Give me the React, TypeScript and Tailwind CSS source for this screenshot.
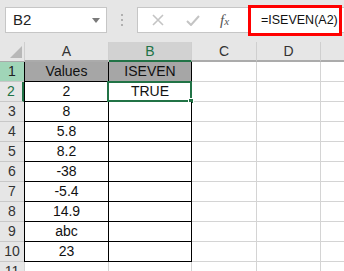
import React from 'react'

const font = { fontFamily: '"Liberation Sans", Arial, sans-serif' }

const rows: [string, string][] = [
    ['Values', 'ISEVEN'],
    ['2', 'TRUE'],
    ['8', ''],
    ['5.8', ''],
    ['8.2', ''],
    ['-38', ''],
    ['-5.4', ''],
    ['14.9', ''],
    ['abc', ''],
    ['23', ''],
    ['', ''],
]

function FormulaBar() {
    return (
        <div className="flex h-[42px] items-start bg-[#e6e6e6]">
            {/* Name box */}
            <div className="ml-[5px] mt-[7px] flex h-[26px] w-[102px] shrink-0 items-center justify-between border border-[#c6c6c6] bg-white pl-[7px] pr-[6px]">
                <span className="text-[15px] text-[#222]">B2</span>
                <svg width="8" height="5" viewBox="0 0 8 5">
                    <path d="M0 0h8L4 5z" fill="#7a7a7a" />
                </svg>
            </div>

            {/* Dots */}
            <div className="ml-[14px] mt-[14px] flex shrink-0 flex-col gap-[3px]">
                <span className="h-[2px] w-[2px] bg-[#b0b0b0]" />
                <span className="h-[2px] w-[2px] bg-[#b0b0b0]" />
                <span className="h-[2px] w-[2px] bg-[#b0b0b0]" />
            </div>

            {/* Formula box */}
            <div className="ml-[14px] mt-[7px] flex h-[26px] min-w-0 flex-1 items-center border border-r-0 border-[#c6c6c6] bg-white">
                <div className="flex w-[110px] shrink-0 items-center">
                    <svg className="ml-[14px]" width="12" height="12" viewBox="0 0 12 12">
                        <path d="M1 1l10 10M11 1L1 11" stroke="#c4c4c4" strokeWidth="1.6" />
                    </svg>
                    <svg className="ml-[22px]" width="14" height="11" viewBox="0 0 14 11">
                        <path d="M1 6l4 4 8-9" stroke="#c4c4c4" strokeWidth="2" fill="none" />
                    </svg>
                    <span
                        className="ml-[20px] text-[15px] italic text-[#555]"
                        style={{ fontFamily: '"Liberation Serif", serif' }}
                    >
                        f<span className="text-[11px]">x</span>
                    </span>
                </div>
                <div className="-my-[3px] mr-[2px] flex h-[31px] min-w-0 flex-1 items-center border-[3px] border-[#ff0000] bg-white pl-[10px]">
                    <span className="whitespace-nowrap text-[12.5px] text-[#111]">=ISEVEN(A2)</span>
                </div>
            </div>
        </div>
    )
}

function ColumnHeaders() {
    return (
        <div className="flex h-[20px] bg-[#e6e6e6] text-[14px] text-[#333]">
            <div className="relative w-[24px] border-b border-[#ababab]">
                <svg className="absolute bottom-[3px] right-[2px]" width="12" height="12" viewBox="0 0 12 12">
                    <path d="M12 0v12H0z" fill="#b8b8b8" />
                </svg>
            </div>
            <div className="flex w-[85px] items-center justify-center border-b-2 border-l border-r border-b-[#ababab] border-l-[#cfcfcf] border-r-[#cfcfcf]">
                A
            </div>
            <div className="flex w-[83px] items-center justify-center border-b-2 border-r border-b-[#217346] border-r-[#cfcfcf] bg-[#d2d2d2] text-[#217346]">
                B
            </div>
            <div className="flex w-[65px] items-center justify-center border-b-2 border-r border-b-[#ababab] border-r-[#cfcfcf]">
                C
            </div>
            <div className="flex w-[64px] items-center justify-center border-b-2 border-r border-b-[#ababab] border-r-[#cfcfcf]">
                D
            </div>
            <div className="flex-1 border-b-2 border-[#ababab]" />
        </div>
    )
}

export default function App() {
    return (
        <div className="h-[271px] w-[344px] overflow-hidden bg-white" style={font}>
            <FormulaBar />
            <ColumnHeaders />
            {rows.map(([a, b], i) => {
                const n = i + 1
                const inTable = n <= 10
                const lineA = inTable ? 'border-black' : 'border-[#d4d4d4]'
                const fill = n === 1 ? 'bg-[#a6a6a6]' : 'bg-white'
                return (
                    <div key={n} className="flex h-[20px] text-[14px] text-[#111]">
                        <div
                            className={`flex w-[24px] items-center justify-center border-b border-[#c8c8c8] ${
                                n === 1 ? 'bg-[#a0d5b8] text-[#222]' : 'bg-[#e6e6e6] text-[#333]'
                            } ${n === 2 ? 'border-r-2 border-r-[#217346] text-[#217346]' : ''}`}
                        >
                            {n}
                        </div>
                        <div className={`flex w-[85px] items-center justify-center border-b border-l border-r ${lineA} ${fill}`}>
                            {a}
                        </div>
                        <div className={`relative flex w-[83px] items-center justify-center border-b border-r ${lineA} ${fill}`}>
                            {b}
                            {n === 2 && (
                                <div className="absolute -left-[2px] -top-[1px] h-[21px] w-[85px] border-2 border-[#217346]">
                                    <span className="absolute -bottom-[4px] -right-[4px] h-[6px] w-[6px] border border-white bg-[#217346]" />
                                </div>
                            )}
                        </div>
                        <div className="w-[65px] border-b border-r border-[#d4d4d4]" />
                        <div className="w-[64px] border-b border-r border-[#d4d4d4]" />
                        <div className="flex-1 border-b border-[#d4d4d4]" />
                    </div>
                )
            })}
        </div>
    )
}
